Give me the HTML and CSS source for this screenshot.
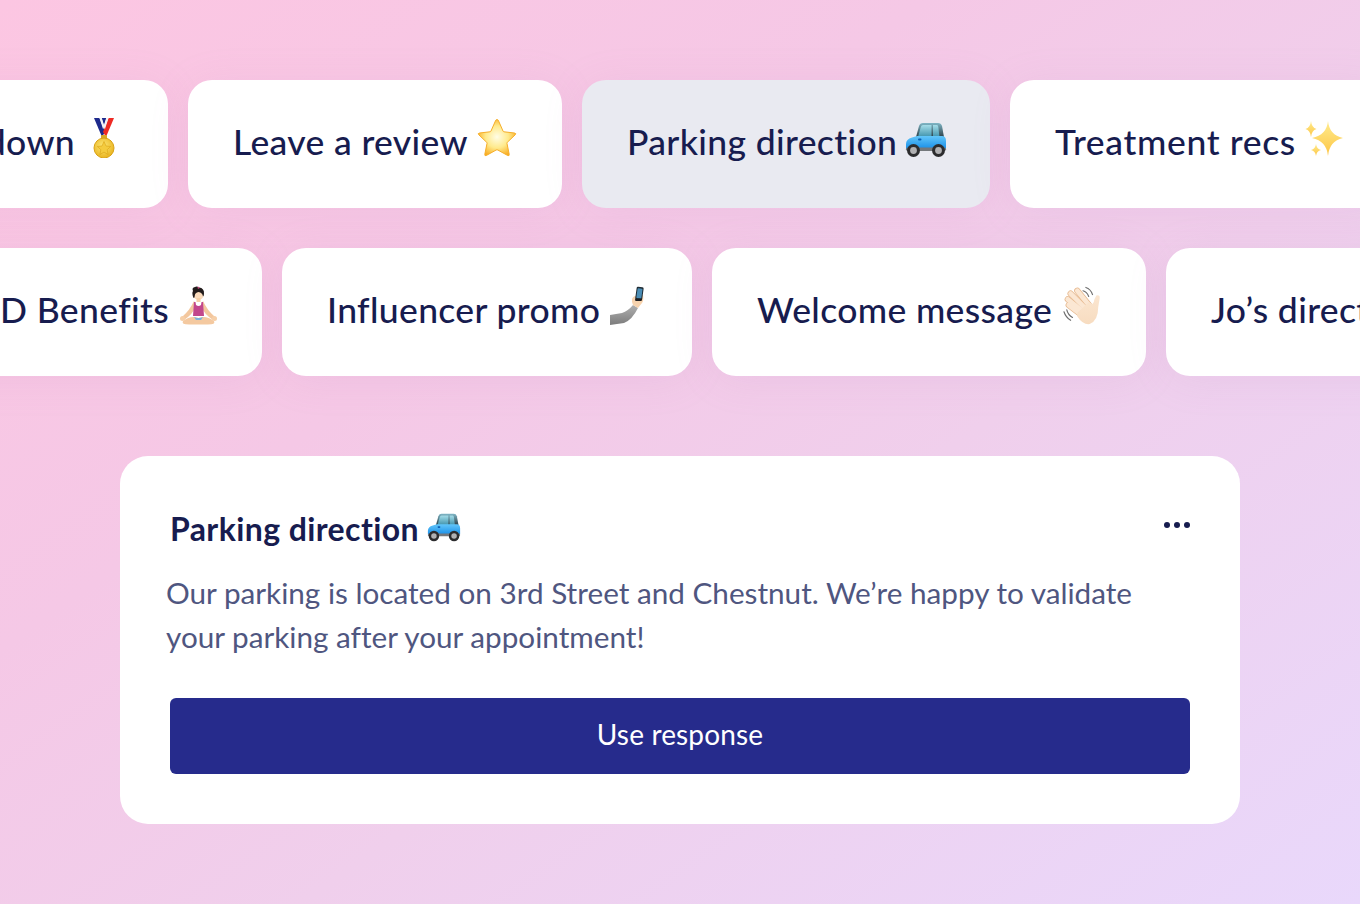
FILE: index.html
```html
<!DOCTYPE html>
<html lang="en">
<head>
<meta charset="utf-8">
<title>Saved responses</title>
<link rel="stylesheet" href="styles.css">
</head>
<body>
<svg class="defs" aria-hidden="true">
  <defs>
    <radialGradient id="gStar" cx=".5" cy=".48" r=".55"><stop offset="0" stop-color="#fffde6"/><stop offset=".55" stop-color="#ffea8c"/><stop offset="1" stop-color="#f9ae24"/></radialGradient>
    <linearGradient id="gCar" x1="0" y1="0" x2="0" y2="1"><stop offset="0" stop-color="#62c6fa"/><stop offset="1" stop-color="#1289e6"/></linearGradient>
    <linearGradient id="gGlass" x1="0" y1="0" x2="0" y2="1"><stop offset="0" stop-color="#a5dde8"/><stop offset="1" stop-color="#3f93ad"/></linearGradient>
    <linearGradient id="gRoof" x1="0" y1="0" x2="0" y2="1"><stop offset="0" stop-color="#7fb6c6"/><stop offset="1" stop-color="#2c3f48"/></linearGradient>
    <radialGradient id="gGold" cx=".45" cy=".4" r=".65"><stop offset="0" stop-color="#fde878"/><stop offset="1" stop-color="#e8b018"/></radialGradient>
    <linearGradient id="gSpark" x1="0" y1="0" x2="0" y2="1"><stop offset="0" stop-color="#ffec8e"/><stop offset="1" stop-color="#fdc544"/></linearGradient>
    <linearGradient id="gSkin" x1="0" y1="0" x2="0" y2="1"><stop offset="0" stop-color="#fbe6d0"/><stop offset="1" stop-color="#f7dcc0"/></linearGradient>
    <linearGradient id="gSleeve" x1="0" y1="0" x2="0" y2="1"><stop offset="0" stop-color="#b0b0b0"/><stop offset="1" stop-color="#7c7c7c"/></linearGradient>
    <symbol id="car" viewBox="0 0 42 36">
      <path d="M11 15 L14 4 Q15 1 18 1 H33 Q36 1 37 4 L39 15 Z" fill="url(#gRoof)"/>
      <path d="M13 15 L15.800 5 Q16.300 3 18 3 H26.500 V15 Z" fill="url(#gGlass)"/>
      <path d="M28 3 H32 Q33 3 33.300 5 L34.500 15 H28 Z" fill="url(#gGlass)"/>
      <path d="M1 22 Q1 17 7 15.500 L12 14 H37 Q41 14 41 19 V26 Q41 28 38 28 H4 Q1 28 1 26 Z" fill="url(#gCar)"/>
      <rect x="1" y="25.500" width="40" height="3.500" rx="1.700" fill="#74787c"/>
      <circle cx="8.500" cy="28.500" r="6.500" fill="#2c2c2e"/><circle cx="8.500" cy="28.500" r="3.400" fill="#b0b0b2"/>
      <circle cx="33.500" cy="28.500" r="6.500" fill="#2c2c2e"/><circle cx="33.500" cy="28.500" r="3.400" fill="#b0b0b2"/>
      <rect x="13" y="16.500" width="3.500" height="2" rx="1" fill="#0a5fb4"/>
    </symbol>
  </defs>
</svg>

<main class="page">
  <section class="chips">
    <div class="chip-row row-one">
      <button class="chip chip-first chip-medal">
        <span>Countdown</span>
        <svg class="emoji" viewBox="0 0 40 40" aria-hidden="true">
          <path d="M10 0 H15.500 L21 14 L18 19 Z" fill="#1e2a8c"/>
          <path d="M30 0 H24.500 L19 14 L22 19 Z" fill="#ee2a24"/>
          <path d="M17.500 0 H22.500 L20 8 Z" fill="#1e2a8c"/>
          <path d="M15.500 0 H17.800 L20.300 8 L19 11 Z" fill="#f3f3f7"/>
          <path d="M24.500 0 H22.200 L19.700 8 L21 11 Z" fill="#f3f3f7"/>
          <rect x="17" y="17" width="6" height="5" rx="1" fill="#d8a926"/>
          <circle cx="20" cy="30" r="10" fill="url(#gGold)" stroke="#d9a216" stroke-width="1"/>
          <path d="M20 23.500 L22 28 L26.700 28.500 L23.200 31.700 L24.100 36.500 L20 34.100 L15.900 36.500 L16.800 31.700 L13.300 28.500 L18 28 Z" fill="#f4cb3e" stroke="#d9a216" stroke-width=".6"/>
        </svg>
      </button>
      <button class="chip chip-review">
        <span>Leave a review</span>
        <svg class="emoji" viewBox="0 0 40 40" aria-hidden="true">
          <path d="M20 1.500 Q21 1.500 21.600 3 L26 13 Q26.300 13.700 27 13.800 L37.500 15 Q39.500 15.300 38.200 16.800 L30.300 24.300 Q29.800 24.800 30 25.500 L32.200 36.300 Q32.400 38.300 30.700 37.500 L20.800 32 Q20 31.600 19.200 32 L9.300 37.500 Q7.600 38.300 7.800 36.300 L10 25.500 Q10.200 24.800 9.700 24.300 L1.800 16.800 Q.5 15.300 2.500 15 L13 13.800 Q13.700 13.700 14 13 L18.400 3 Q19 1.500 20 1.500 Z" fill="url(#gStar)" stroke="#f6ae2a" stroke-width="1"/>
        </svg>
      </button>
      <button class="chip chip-active chip-parking">
        <span>Parking direction</span>
        <svg class="emoji emoji-car emoji-nudge-2" aria-hidden="true"><use href="#car"/></svg>
      </button>
      <button class="chip chip-treatment">
        <span>Treatment recs</span>
        <svg class="emoji" viewBox="0 0 40 40" aria-hidden="true">
          <path d="M23 3 Q24.300 17 38 20 Q24.300 23 23 38 Q21.700 23 7 20 Q21.700 17 23 3 Z" fill="url(#gSpark)"/>
          <path d="M6 3 Q6.600 9.500 11.500 11 Q6.600 12.500 6 19 Q5.400 12.500 .5 11 Q5.400 9.500 6 3 Z" fill="url(#gSpark)"/>
          <path d="M11 26 Q11.600 30.800 16 32 Q11.600 33.200 11 38 Q10.400 33.200 6 32 Q10.400 30.800 11 26 Z" fill="url(#gSpark)"/>
        </svg>
      </button>
    </div>
    <div class="chip-row row-two">
      <button class="chip chip-first chip-cbd">
        <span>CBD Benefits</span>
        <svg class="emoji" viewBox="0 0 40 40" aria-hidden="true">
          <path d="M16 15 Q12 24 4 31 L6 34 Q15 28 18 20 Z" fill="#f3c79e"/>
          <path d="M25 15 Q29 24 37 31 L35 34 Q26 28 23 20 Z" fill="#f3c79e"/>
          <path d="M16 16 H17.500 L18 19 Q20.500 21 23 19 L23.500 16 H25 L26 30 H15 Z" fill="#c2478c"/>
          <path d="M5 35 Q13 29 20.500 32 Q28 29 36 35 Q38 38.500 30 38.500 H11 Q3 38.500 5 35 Z" fill="#f4c9a0"/>
          <path d="M16 31 Q20.500 33 25 31 L23 34 H18 Z" fill="#7cb2dc"/>
          <circle cx="4.500" cy="32.500" r="2.500" fill="#f6cfa8"/><circle cx="36.500" cy="32.500" r="2.500" fill="#f6cfa8"/>
          <circle cx="20.500" cy="9" r="5" fill="#fbdcbd"/>
          <rect x="18.500" y="12" width="4" height="4" fill="#f6cfa8"/>
          <path d="M15.500 12 Q13.500 7 15 5 Q13.500 1.500 17 1 Q19 0 21 1.500 Q26.500 2 26 8 Q25.800 10 25 10.500 Q24.500 6.500 20.500 6 Q17 6.500 16.800 9.500 Q16.800 12 15.500 12 Z" fill="#221c1c"/>
          <circle cx="20.500" cy="1.800" r="1" fill="#c84a80"/>
        </svg>
      </button>
      <button class="chip chip-influencer">
        <span>Influencer promo</span>
        <svg class="emoji emoji-nudge-3" viewBox="0 0 40 40" aria-hidden="true">
          <path d="M0 29 L12 27 Q18 25 23 19 L28 22 Q22 34 14 37 L0 39 Z" fill="url(#gSleeve)"/>
          <path d="M22 13 Q24 9 28 10 L33 9 Q34 14 32 17 L28 22 L23 19 Q21.500 16 22 13 Z" fill="#f7d3ae"/>
          <rect x="26" y="1" width="7" height="13" rx="1.300" transform="rotate(8 30 7)" fill="#1f2b33"/>
          <rect x="27" y="2.500" width="5" height="10" rx=".8" transform="rotate(8 30 7)" fill="#4b8db5"/>
          <rect x="25" y="12.500" width="7" height="2.400" rx="1.200" fill="#1d1d1f"/>
        </svg>
      </button>
      <button class="chip chip-welcome">
        <span>Welcome message</span>
        <svg class="emoji emoji-nudge-2" viewBox="0 0 40 42" aria-hidden="true">
          <path d="M20 5 Q24 6 26 11 M23 1.500 Q28 3 30 9" fill="none" stroke="#6e6e6e" stroke-width="1.200" stroke-linecap="round"/>
          <path d="M3 25 Q4 30 9 33 M0 27 Q2 33 7 36" fill="none" stroke="#6e6e6e" stroke-width="1.200" stroke-linecap="round"/>
          <g stroke-linecap="round" fill="none" stroke-width="6.500" stroke="#e6b88e">
            <path d="M7 8 L22 23"/><path d="M4 14 L19 26"/><path d="M5 20 L18 30"/><path d="M14 5 L27 21"/>
          </g>
          <g stroke-linecap="round" fill="none" stroke-width="5" stroke="#fbe7d3">
            <path d="M7 8 L22 23"/><path d="M4 14 L19 26"/><path d="M5 20 L18 30"/><path d="M14 5 L27 21"/>
          </g>
          <path d="M14 28 L26 17 L30 19 Q31.500 18 32 14 L34 10 Q38 9 37.500 13 L36 22 Q36 36 27 40 Q20 41 14 32 Z" fill="url(#gSkin)"/>
        </svg>
      </button>
      <button class="chip chip-last">
        <span>Jo’s directions</span>
      </button>
    </div>
  </section>

  <article class="card">
    <header class="card-head">
      <h2 class="card-title">Parking direction <svg class="emoji-small" aria-hidden="true"><use href="#car"/></svg></h2>
      <svg class="dots" viewBox="0 0 26 8" aria-hidden="true"><circle cx="3" cy="4" r="3"/><circle cx="13" cy="4" r="3"/><circle cx="23" cy="4" r="3"/></svg>
    </header>
    <p class="card-text">Our parking is located on 3rd Street and Chestnut. We’re happy to validate your parking after your appointment!</p>
    <button class="use-btn"><span class="use-label">Use response</span></button>
  </article>
</main>
</body>
</html>
```

FILE: styles.css
```css
* { box-sizing: border-box; }

html, body {
  margin: 0;
  height: 904px;
  overflow: hidden;
}

body {
  background: linear-gradient(145deg, #fcc6e2 0%, #f5c8e6 35%, #f0cfec 60%, #e9d8fb 100%);
  font-family: "Lato", "Liberation Sans", sans-serif;
  font-variant-ligatures: none;
  color: #171c4f;
}

.defs {
  display: block;
  width: 0;
  height: 0;
}

.page {
  display: flex;
  flex-direction: column;
  padding-top: 80px;
}

.chips {
  display: flex;
  flex-direction: column;
  gap: 40px;
}

.chip-row {
  display: flex;
  gap: 20px;
}

.row-one { margin-left: -102px; }
.row-two { margin-left: -108px; }

.chip {
  flex: none;
  height: 128px;
  display: flex;
  align-items: center;
  justify-content: space-between;
  padding: 0 45px 5px;
  border: 0;
  border-radius: 24px;
  background: #fff;
  box-shadow: 0 4px 40px rgba(190, 130, 190, 0.12);
  font-family: inherit;
  font-size: 35.500px;
  font-weight: 500;
  letter-spacing: .35px;
  font-variant-ligatures: none;
  color: #171c4f;
  white-space: nowrap;
}

.chip-active { background: #e9eaf1; }

.chip-first {
  justify-content: flex-end;
  gap: 9px;
  padding-right: 44px;
}

.chip-medal { width: 270px; }
.chip-review { width: 374px; }
.chip-parking { width: 408px; }
.chip-treatment { width: 380px; letter-spacing: .65px; }
.chip-cbd { width: 370px; }
.chip-influencer { width: 410px; }
.chip-welcome { width: 434px; }
.chip-last { width: 360px; justify-content: flex-start; }

.emoji {
  flex: none;
  width: 40px;
  height: 40px;
  margin-bottom: 7px;
}

.emoji-car {
  width: 42px;
  height: 36px;
  margin-bottom: 3px;
}

.emoji-nudge-2 { margin-right: -2px; }
.emoji-nudge-3 { margin-right: -3px; }

.card {
  align-self: center;
  width: 1120px;
  margin-top: 80px;
  padding: 50px;
  background: #fff;
  border-radius: 28px;
}

.card-head {
  display: flex;
  justify-content: space-between;
  align-items: center;
  height: 46px;
}

.card-title {
  margin: -2px 0 0;
  display: flex;
  align-items: center;
  gap: 8px;
  font-size: 32px;
  font-weight: 700;
  letter-spacing: .4px;
}

.emoji-small {
  width: 34px;
  height: 29px;
  margin-bottom: 2px;
}

.dots {
  width: 26px;
  height: 8px;
  fill: #171c4f;
  margin-bottom: 8px;
}

.card-text {
  margin: 19px 0 39px -4px;
  font-size: 29.700px;
  line-height: 44px;
  color: #4f5680;
}

.use-btn {
  display: block;
  width: 100%;
  height: 76px;
  padding: 0 0 4px;
  border: 0;
  border-radius: 6px;
  background: #262b8c;
  color: #fff;
  font-family: inherit;
  font-size: 28px;
  letter-spacing: .15px;
}

.use-label {
  display: block;
}
```
